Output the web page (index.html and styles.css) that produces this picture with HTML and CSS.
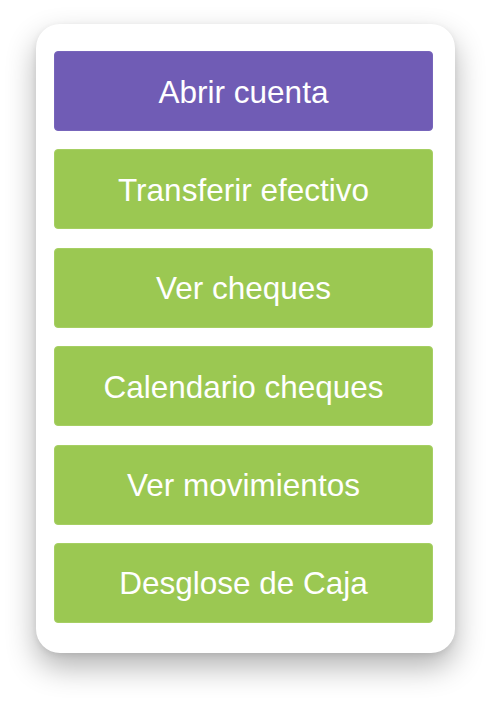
FILE: index.html
```html
<!DOCTYPE html>
<html lang="es">
<head>
<meta charset="utf-8">
<title>Menú</title>
<link rel="stylesheet" href="styles.css">
</head>
<body>
<div class="card">
  <button class="btn btn-primary">Abrir cuenta</button>
  <button class="btn btn-success">Transferir efectivo</button>
  <button class="btn btn-success">Ver cheques</button>
  <button class="btn btn-success">Calendario cheques</button>
  <button class="btn btn-success">Ver movimientos</button>
  <button class="btn btn-success">Desglose de Caja</button>
</div>
</body>
</html>
```
FILE: styles.css
```css
html, body {
  margin: 0;
  padding: 0;
  background: #ffffff;
}
body {
  min-height: 702px;
  box-sizing: border-box;
  padding: 24px 0 0 36px;
  font-family: "Liberation Sans", Arial, sans-serif;
}
.card {
  width: 419px;
  box-sizing: border-box;
  background: #ffffff;
  border-radius: 24px;
  padding: 27px 22px 30px 18px;
  display: flex;
  flex-direction: column;
  gap: 18.4px;
  box-shadow: 0 14px 30px rgba(0, 0, 0, 0.3), 0 2px 6px rgba(0, 0, 0, 0.08);
}
.btn {
  height: 80px;
  border: 1px solid transparent;
  border-radius: 4px;
  color: #ffffff;
  font-family: "Liberation Sans", Arial, sans-serif;
  font-size: 31.5px;
  display: flex;
  align-items: center;
  justify-content: center;
  padding: 2px 0 0;
  cursor: pointer;
}
.btn-primary {
  background: #705cb5;
  border-color: #7765bb;
}
.btn-success {
  background: #9bc852;
  border-color: #a6cf63;
}
```
